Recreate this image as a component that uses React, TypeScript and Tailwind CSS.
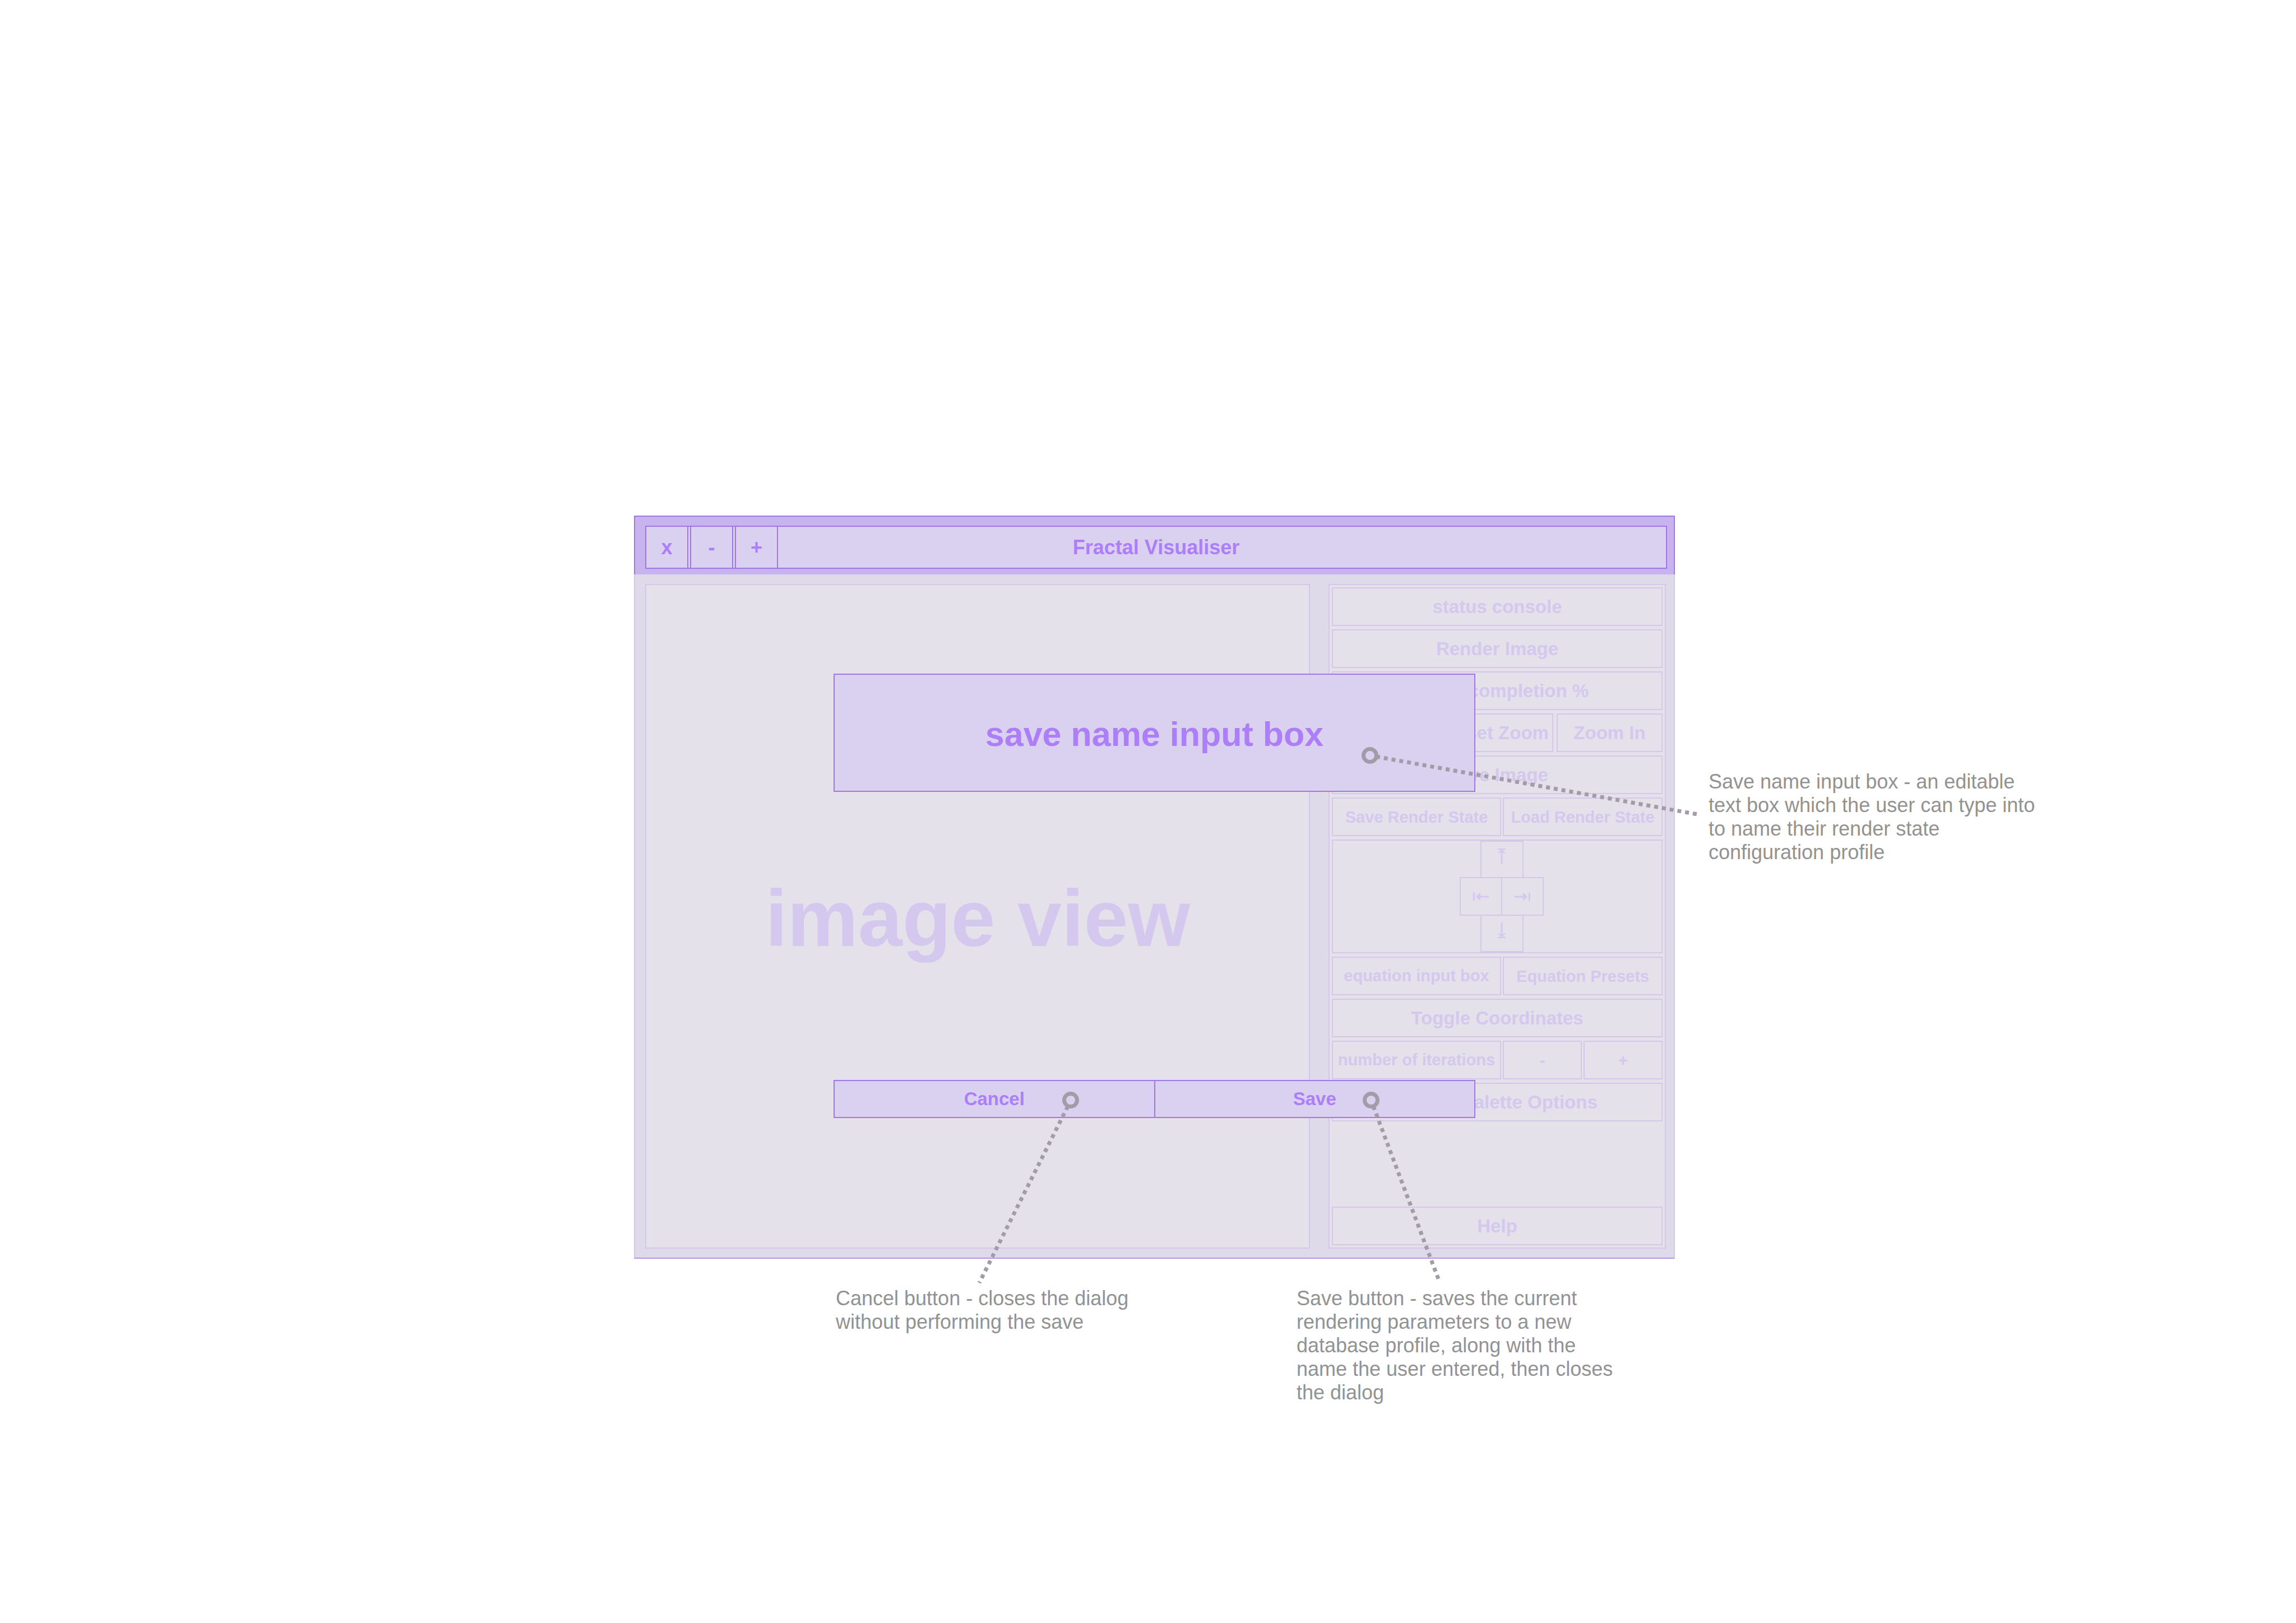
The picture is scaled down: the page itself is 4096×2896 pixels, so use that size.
import type { ReactNode } from "react";

const faint = "border-2 border-[#d4c8e8] bg-[#e4e1eb] text-[#d4c8ee] font-bold whitespace-nowrap";

function Cell({ children, small }: { children: ReactNode; small?: boolean }) {
  return (
    <button
      type="button"
      className={`${faint} flex h-[69px] min-w-0 items-center justify-center ${small ? "text-[29px]" : "text-[33px]"}`}
    >
      {children}
    </button>
  );
}

function Label({ children }: { children: ReactNode }) {
  return <div className={`${faint} flex h-[69px] items-center justify-center text-[33px]`}>{children}</div>;
}

function VerticalArrow({ down }: { down?: boolean }) {
  return (
    <svg viewBox="0 0 14 28" className={`h-7 w-[14px] ${down ? "rotate-180" : ""}`} fill="currentColor">
      <path d="M0 0H14V2.4H0Z" />
      <path d="M5.5 3H8.5V28H5.5Z" />
      <path d="M7 1.6L14 8.4H11L7 5.2L3 8.4H0Z" />
    </svg>
  );
}

function HorizontalArrow({ right }: { right?: boolean }) {
  return (
    <svg viewBox="0 0 28 16" className={`h-4 w-7 ${right ? "rotate-180" : ""}`} fill="currentColor">
      <path d="M0 0.5H3V15.5H0Z" />
      <path d="M5 8L13 0.5V6.5H28V9.5H13V15.5Z" />
    </svg>
  );
}

function TitleButton({ children, label }: { children: ReactNode; label: string }) {
  return (
    <button
      type="button"
      aria-label={label}
      className="flex w-[77px] items-center justify-center border-2 border-[#a377e3] bg-[#dad1f0]"
    >
      {children}
    </button>
  );
}

function TitleBar() {
  return (
    <header className="border-x-2 border-t-2 border-[#a377e3] bg-[#c7b4ee] pt-4 pr-3 pb-[10px] pl-[18px] text-[36px] font-bold text-[#ac7ff8]">
      <div className="grid h-[77px]">
        <h1 className="flex items-center justify-center border-2 border-[#a377e3] bg-[#dad1f0] [grid-area:1/1]">
          Fractal Visualiser
        </h1>
        <div className="flex gap-[3px] [grid-area:1/1]">
          <TitleButton label="Close">x</TitleButton>
          <TitleButton label="Minimise">-</TitleButton>
          <TitleButton label="Maximise">+</TitleButton>
        </div>
      </div>
    </header>
  );
}

function DirectionPad() {
  return (
    <div className={`${faint} flex h-[203px] flex-col items-center`}>
      <div className="flex flex-col items-center pl-4">
        <button type="button" aria-label="Up" className="flex h-[65px] w-[77px] justify-center border-2 border-b-0 border-[#d4c8e8] pt-3">
          <VerticalArrow />
        </button>
        <div className="flex h-[69px]">
          <button type="button" aria-label="Left" className="flex w-[74px] items-center justify-center border-2 border-r-0 border-[#d4c8e8]">
            <HorizontalArrow />
          </button>
          <button type="button" aria-label="Right" className="flex w-[76px] items-center justify-center border-2 border-[#d4c8e8]">
            <HorizontalArrow right />
          </button>
        </div>
        <button type="button" aria-label="Down" className="flex h-[65px] w-[77px] justify-center border-2 border-t-0 border-[#d4c8e8] pt-3">
          <VerticalArrow down />
        </button>
      </div>
    </div>
  );
}

function SidePanel() {
  return (
    <aside className="flex w-[602px] flex-col gap-[6px] border-2 border-[#d4c8e8] bg-[#e4e1eb] p-1">
      <Label>status console</Label>
      <Cell>Render Image</Cell>
      <Label>render completion %</Label>
      <div className="grid grid-cols-[184fr_205fr_189fr] gap-[6px]">
        <Cell>Zoom Out</Cell>
        <Cell>Reset Zoom</Cell>
        <Cell>Zoom In</Cell>
      </div>
      <Cell>Save Image</Cell>
      <div className="grid grid-cols-[302fr_285fr] gap-[3px]">
        <Cell small>Save Render State</Cell>
        <Cell small>Load Render State</Cell>
      </div>
      <DirectionPad />
      <div className="grid grid-cols-[302fr_285fr] gap-[3px]">
        <input
          aria-label="Equation"
          defaultValue="equation input box"
          className={`${faint} h-[69px] min-w-0 text-center text-[29px]`}
        />
        <Cell small>Equation Presets</Cell>
      </div>
      <Cell>Toggle Coordinates</Cell>
      <div className="grid grid-cols-[302fr_141fr_141fr] gap-[3px]">
        <input
          aria-label="Iterations"
          defaultValue="number of iterations"
          className={`${faint} h-[69px] min-w-0 text-center text-[29px]`}
        />
        <Cell small>-</Cell>
        <Cell small>+</Cell>
      </div>
      <Cell>Colour Palette Options</Cell>
      <div className="mt-auto flex flex-col">
        <Cell>Help</Cell>
      </div>
    </aside>
  );
}

function SaveDialog() {
  const box = "border-2 border-[#a377e3] bg-[#dad1f0] font-bold text-[#ac7ff8]";
  return (
    <div role="dialog" aria-label="Save render state" className="absolute inset-x-[356px] top-[282px] bottom-[251px] flex flex-col justify-between">
      <input
        aria-label="Save name"
        defaultValue="save name input box"
        className={`${box} h-[211px] w-full pt-1 text-center text-[61px]`}
      />
      <div className="flex h-[68px] text-[33px]">
        <button type="button" className={`${box} flex-1 border-r-0`}>Cancel</button>
        <button type="button" className={`${box} flex-1`}>Save</button>
      </div>
    </div>
  );
}

const connectors = [
  { cx: 1313, cy: 428, x1: 1324, y1: 430, x2: 1897, y2: 533 },
  { cx: 779, cy: 1043, x1: 774, y1: 1054, x2: 616, y2: 1369 },
  { cx: 1315, cy: 1043, x1: 1319, y1: 1054, x2: 1435, y2: 1362 },
];

function Connectors() {
  return (
    <svg
      viewBox="0 0 1857 1326"
      className="pointer-events-none absolute inset-0 h-full w-full overflow-visible"
      fill="none"
      stroke="#a39ba7"
      strokeWidth="7"
    >
      {connectors.map((c) => (
        <g key={`${c.cx}-${c.cy}`}>
          <circle cx={c.cx} cy={c.cy} r="11.5" />
          <line x1={c.x1} y1={c.y1} x2={c.x2} y2={c.y2} strokeDasharray="7 7" />
        </g>
      ))}
    </svg>
  );
}

export default function App() {
  return (
    <main className="grid min-h-screen grid-cols-[1131fr_1857fr_1108fr] content-start bg-white pt-[920px] font-['Liberation_Sans',Arial,sans-serif] text-[36px] leading-[42px] text-[#929292]">
      <section className="relative col-start-2">
        <TitleBar />
        <div className="flex gap-[33px] border-x-2 border-b-2 border-x-[#d4c8e8] border-b-[#b794e6] bg-[#dedaea] pt-[17px] pr-[14px] pb-4 pl-[18px]">
          <div className={`${faint} flex h-[1186px] flex-1 items-center justify-center pt-2 text-[142px]`}>image view</div>
          <SidePanel />
        </div>
        <SaveDialog />
        <Connectors />
      </section>
      <p className="mt-[454px] ml-[60px] w-[590px]">
        Save name input box - an editable text box which the user can type into to name their render state
        configuration profile
      </p>
      <div className="col-start-2 grid grid-cols-[822fr_675fr] pt-[50px] pl-[360px]">
        <p className="max-w-[580px]">Cancel button - closes the dialog without performing the save</p>
        <p className="max-w-[580px]">
          Save button - saves the current rendering parameters to a new database profile, along with the name the
          user entered, then closes the dialog
        </p>
      </div>
    </main>
  );
}
